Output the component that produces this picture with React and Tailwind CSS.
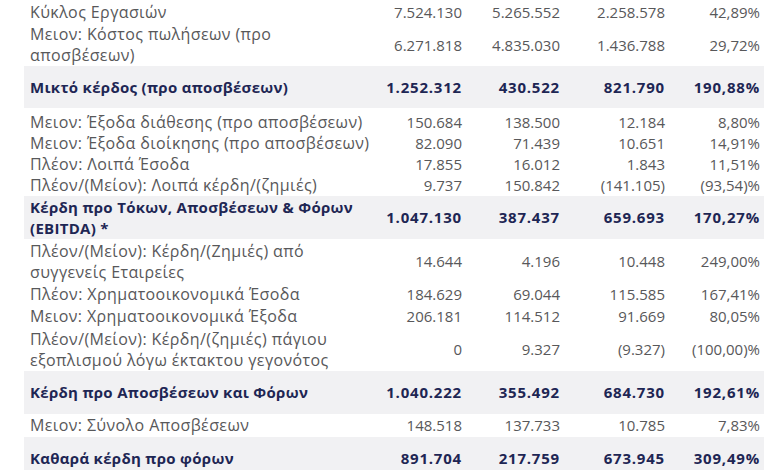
import React from 'react';

// --- Table data ---
const rows = [
    { label: ['Κύκλος Εργασιών'], values: ['7.524.130', '5.265.552', '2.258.578', '42,89%'], h: 'h-[24px]' },
    { label: ['Μειον: Κόστος πωλήσεων (προ', 'αποσβέσεων)'], values: ['6.271.818', '4.835.030', '1.436.788', '29,72%'], h: 'h-[42px]' },
    { label: ['Μικτό κέρδος (προ αποσβέσεων)'], values: ['1.252.312', '430.522', '821.790', '190,88%'], h: 'h-[42px]', total: true },
    { label: ['Μειον: Έξοδα διάθεσης (προ αποσβέσεων)'], values: ['150.684', '138.500', '12.184', '8,80%'], h: 'h-[25px] pt-[3px]' },
    { label: ['Μειον: Έξοδα διοίκησης (προ αποσβέσεων)'], values: ['82.090', '71.439', '10.651', '14,91%'], h: 'h-[21px]' },
    { label: ['Πλέον: Λοιπά Έσοδα'], values: ['17.855', '16.012', '1.843', '11,51%'], h: 'h-[21px]' },
    { label: ['Πλέον/(Μείον): Λοιπά κέρδη/(ζημιές)'], values: ['9.737', '150.842', '(141.105)', '(93,54)%'], h: 'h-[21px]' },
    { label: ['Κέρδη προ Τόκων, Αποσβέσεων & Φόρων', '(EBITDA) *'], values: ['1.047.130', '387.437', '659.693', '170,27%'], h: 'h-[43px]', total: true },
    { label: ['Πλέον/(Μείον): Κέρδη/(Ζημιές) από', 'συγγενείς Εταιρείες'], values: ['14.644', '4.196', '10.448', '249,00%'], h: 'h-[45px]' },
    { label: ['Πλέον: Χρηματοοικονομικά Έσοδα'], values: ['184.629', '69.044', '115.585', '167,41%'], h: 'h-[21px]' },
    { label: ['Μειον: Χρηματοοικονομικά Έξοδα'], values: ['206.181', '114.512', '91.669', '80,05%'], h: 'h-[23px]' },
    { label: ['Πλέον/(Μείον): Κέρδη/(ζημιές) πάγιου', 'εξοπλισμού λόγω έκτακτου γεγονότος'], values: ['0', '9.327', '(9.327)', '(100,00)%'], h: 'h-[43px]' },
    { label: ['Κέρδη προ Αποσβέσεων και Φόρων'], values: ['1.040.222', '355.492', '684.730', '192,61%'], h: 'h-[43px]', total: true },
    { label: ['Μειον: Σύνολο Αποσβέσεων'], values: ['148.518', '137.733', '10.785', '7,83%'], h: 'h-[23px]' },
    { label: ['Καθαρά κέρδη προ φόρων'], values: ['891.704', '217.759', '673.945', '309,49%'], h: 'h-[43px]', total: true },
];

const Row = ({ row }) => (
    <div
        className={`grid grid-cols-[356px_82px_98px_105px_95px] items-center ${row.h} ${row.total ? 'bg-[#f1f1f3] font-bold text-[#1e2654]' : 'text-[#58585a]'}`}
    >
        <div className={`pl-[6px] ${row.total ? 'text-[15px] tracking-[0.3px]' : 'text-[16px] tracking-[0.4px]'}`}>
            {row.label.map((line) => (
                <div key={line} className="whitespace-nowrap">{line}</div>
            ))}
        </div>
        {row.values.map((v, i) => (
            <div key={i} className={`text-right whitespace-nowrap ${row.total ? 'tracking-[0.8px]' : ''}`}>{v}</div>
        ))}
    </div>
);

export default function App() {
    return (
        <div className="w-[780px] h-[470px] overflow-hidden bg-white pl-[24px] text-[15px] leading-[21px] font-['Open_Sans',sans-serif]">
            <div className="w-[740px]">
                {rows.map((row, i) => (
                    <Row key={i} row={row} />
                ))}
            </div>
        </div>
    );
}
